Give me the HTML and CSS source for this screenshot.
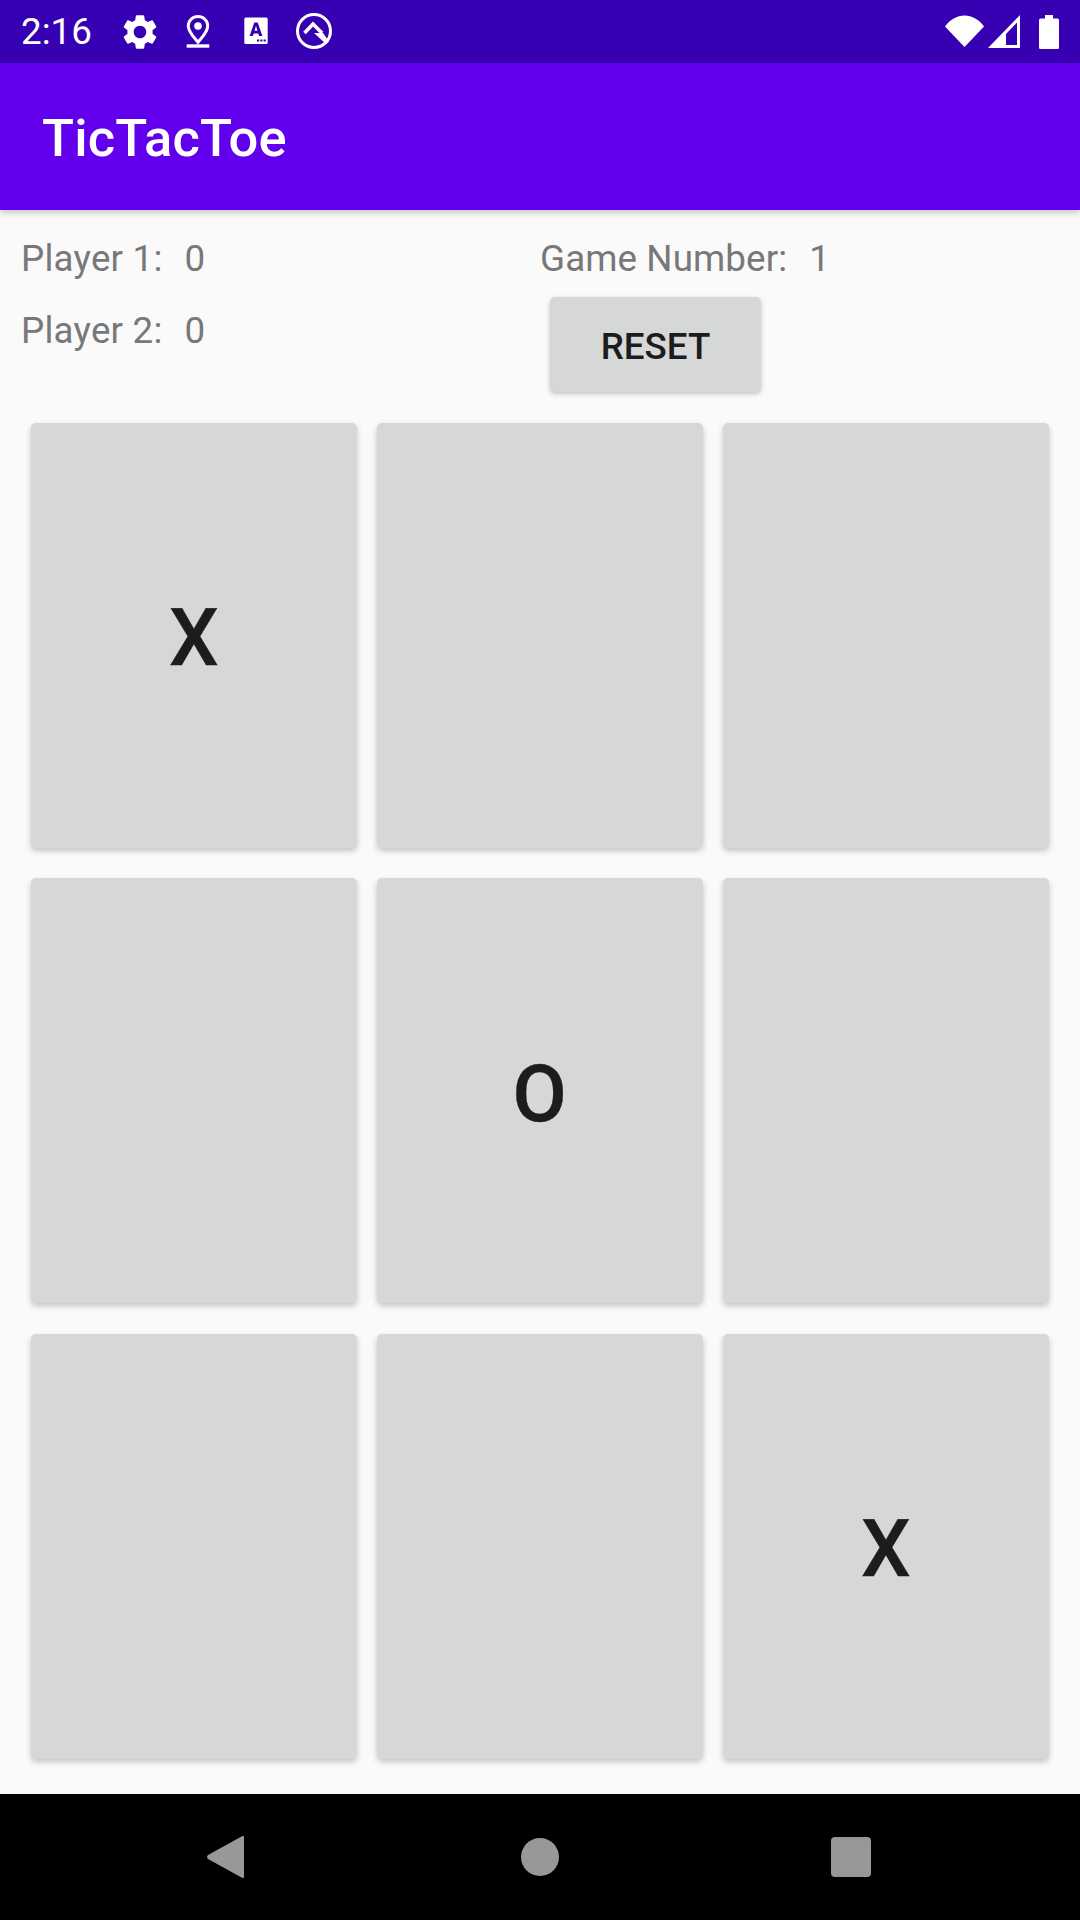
FILE: index.html
```html
<!DOCTYPE html>
<html lang="en">
<head>
<meta charset="utf-8">
<title>TicTacToe</title>
<link rel="stylesheet" href="styles.css">
</head>
<body>
<div class="screen">
  <div class="status-bar">
    <span class="clock">2:16</span>
    <div class="status-icons">
      <svg class="si" viewBox="0 0 24 24"><path fill="#fff" d="M19.14 12.94c.04-.3.06-.61.06-.94 0-.32-.02-.64-.07-.94l2.03-1.58c.18-.14.23-.41.12-.61l-1.92-3.32c-.12-.22-.37-.29-.59-.22l-2.39.96c-.5-.38-1.03-.7-1.62-.94l-.36-2.54c-.04-.24-.24-.41-.48-.41h-3.84c-.24 0-.43.17-.47.41l-.36 2.54c-.59.24-1.13.57-1.62.94l-2.39-.96c-.22-.08-.47 0-.59.22L2.74 8.87c-.12.21-.08.47.12.61l2.03 1.58c-.05.3-.09.63-.09.94s.02.64.07.94l-2.03 1.58c-.18.14-.23.41-.12.61l1.92 3.32c.12.22.37.29.59.22l2.39-.96c.5.38 1.03.7 1.62.94l.36 2.54c.05.24.24.41.48.41h3.84c.24 0 .44-.17.47-.41l.36-2.54c.59-.24 1.13-.56 1.62-.94l2.39.96c.22.08.47 0 .59-.22l1.92-3.32c.12-.22.07-.47-.12-.61l-2.01-1.58zM12 15.6c-1.98 0-3.6-1.62-3.6-3.6s1.62-3.6 3.6-3.6 3.6 1.62 3.6 3.6-1.62 3.6-3.6 3.6z"/></svg>
      <svg class="si" viewBox="0 -3 42 42"><path fill="none" stroke="#fff" stroke-width="3" d="M21 2.500c5.500 0 9.700 4.200 9.700 9.600 0 6.200-5.500 11-9.700 16.100-4.200-5.100-9.700-9.900-9.700-16.100 0-5.400 4.200-9.600 9.700-9.600z"/><circle cx="21" cy="12" r="3.800" fill="#fff"/><rect x="9.700" y="30.300" width="22.600" height="3.400" fill="#fff"/></svg>
      <svg class="si" viewBox="0 -2.500 42 42"><rect x="9.300" y="4" width="23.400" height="26.600" rx="1.500" fill="#fff"/><path fill="#3700b3" d="M14.600 22.500 19.300 9h3.400l4.700 13.500h-3.300l-.8-2.600h-4.600l-.8 2.600zM19.500 17.300h3l-1.500-4.900z"/><rect x="22" y="26" width="2.200" height="2" fill="#3700b3"/><rect x="25.300" y="26" width="2.200" height="2" fill="#3700b3"/><rect x="28.600" y="26" width="2.200" height="2" fill="#3700b3"/></svg>
      <svg class="si" viewBox="0 0 42 42"><circle cx="21" cy="20" r="16.500" fill="none" stroke="#fff" stroke-width="3"/><path fill="none" stroke="#fff" stroke-width="3.600" d="M11.500 22 20 13l9 9"/><path fill="#fff" d="M21 22h9l6 8.500-3 2.500z"/></svg>
    </div>
    <div class="system-icons">
      <svg class="wifi" viewBox="0 0 39 32"><path fill="#fff" d="M0 11.500C5 4.500 12 .5 19.500.5S34 4.500 39 11.500L19.500 32z"/></svg>
      <svg class="signal" viewBox="0 0 32 33"><path fill="#fff" fill-rule="evenodd" d="M32 0v33H0zM29 7.500 18 19v11h11z"/></svg>
      <svg class="battery" viewBox="0 0 20 34"><path fill="#fff" d="M6 0h8v3.500h4.500A1.500 1.500 0 0 1 20 5v27.500a1.500 1.500 0 0 1-1.500 1.500h-17A1.500 1.500 0 0 1 0 32.500V5a1.500 1.500 0 0 1 1.500-1.500H6z"/></svg>
    </div>
  </div>
  <header class="app-bar"><h1 class="title">TicTacToe</h1></header>
  <main class="content">
    <section class="scores">
      <div class="players">
        <div class="stat"><span class="stat-label">Player 1:</span><span class="stat-value">0</span></div>
        <div class="stat"><span class="stat-label">Player 2:</span><span class="stat-value">0</span></div>
      </div>
      <div class="game">
        <div class="stat stat-game"><span class="stat-label">Game Number:</span><span class="stat-value">1</span></div>
        <button class="reset">RESET</button>
      </div>
    </section>
    <section class="board">
      <button class="cell">X</button>
      <button class="cell"></button>
      <button class="cell"></button>
      <button class="cell"></button>
      <button class="cell">O</button>
      <button class="cell"></button>
      <button class="cell"></button>
      <button class="cell"></button>
      <button class="cell">X</button>
    </section>
  </main>
  <nav class="nav-bar">
    <svg class="nav-back" viewBox="0 0 37 42"><path fill="#989898" d="M35 .3c1-.6 2-.1 2 1v39.400c0 1.100-1 1.600-2 1L1 23c-1.300-1-1.300-2.800 0-4z"/></svg>
    <span class="nav-home"></span>
    <span class="nav-recent"></span>
  </nav>
</div>
</body>
</html>
```
FILE: styles.css
```css
* { box-sizing: border-box; }
html, body { margin: 0; padding: 0; }
body { font-family: Roboto, "Noto Sans", sans-serif; background: #fafafa; }
.screen { width: 1080px; height: 1920px; display: flex; flex-direction: column; overflow: hidden; }

.status-bar { height: 63px; flex: none; background: #3700b3; display: flex; align-items: center; padding: 0 21px 0 21px; color: #fff; }
.clock { font-size: 36.75px; width: 77px; line-height: 63px; }
.status-icons { display: flex; gap: 16px; margin-left: 21px; margin-top: 1px; }
.si { width: 42px; height: 42px; display: block; }
.system-icons { margin-left: auto; display: flex; align-items: flex-start; height: 34px; }
.wifi { width: 39px; height: 32px; margin-right: 4px; }
.signal { width: 32px; height: 33px; margin-right: 19px; }
.battery { width: 20px; height: 34px; }

.app-bar { height: 147px; flex: none; background: #6200ee; display: flex; align-items: center; padding: 2px 0 0 42px; box-shadow: 0 3px 6px rgba(0,0,0,.2); position: relative; }
.title { margin: 0; color: #fff; font-size: 52.5px; font-weight: 500; letter-spacing: .15px; }

.content { flex: 1; display: flex; flex-direction: column; min-height: 0; }
.scores { display: flex; height: 212.700px; flex: none; padding: 27px 0 0 21px; }
.players { width: 519px; display: flex; flex-direction: column; gap: 29px; }
.game { display: flex; flex-direction: column; align-items: flex-start; }
.stat { font-size: 36.75px; line-height: 43px; color: #787878; display: flex; letter-spacing: .22px; }
.stat-game { letter-spacing: .1px; }
.stat-label { margin-right: 22px; }
.reset { margin: 17px 0 0 10px; width: 211px; height: 95px; border: 0; border-radius: 5px; background: #d6d7d7; color: #1c1c1c; font: 500 36.75px Roboto, sans-serif; box-shadow: 0 2px 5px rgba(0,0,0,.22); padding: 4px 0 0; }

.board { display: grid; grid-template-columns: repeat(3, 326.500px); grid-template-rows: repeat(3, 425px); column-gap: 19.500px; row-gap: 30.500px; padding-left: 30.500px; }
.cell { border: 0; padding: 6px 0 0; border-radius: 5px; background: #d6d7d7; color: #1c1c1c; font: 500 78.750px Roboto, sans-serif; -webkit-text-stroke: .4px #1c1c1c; box-shadow: 0 3px 6px rgba(0,0,0,.22); }

.nav-bar { height: 126px; flex: none; background: #000; display: flex; align-items: center; }
.nav-back { width: 37px; height: 42px; margin-left: 207px; }
.nav-home { width: 38px; height: 38px; border-radius: 50%; background: #989898; margin-left: 277px; }
.nav-recent { width: 40px; height: 40px; border-radius: 4px; background: #989898; margin-left: 272px; }
```
